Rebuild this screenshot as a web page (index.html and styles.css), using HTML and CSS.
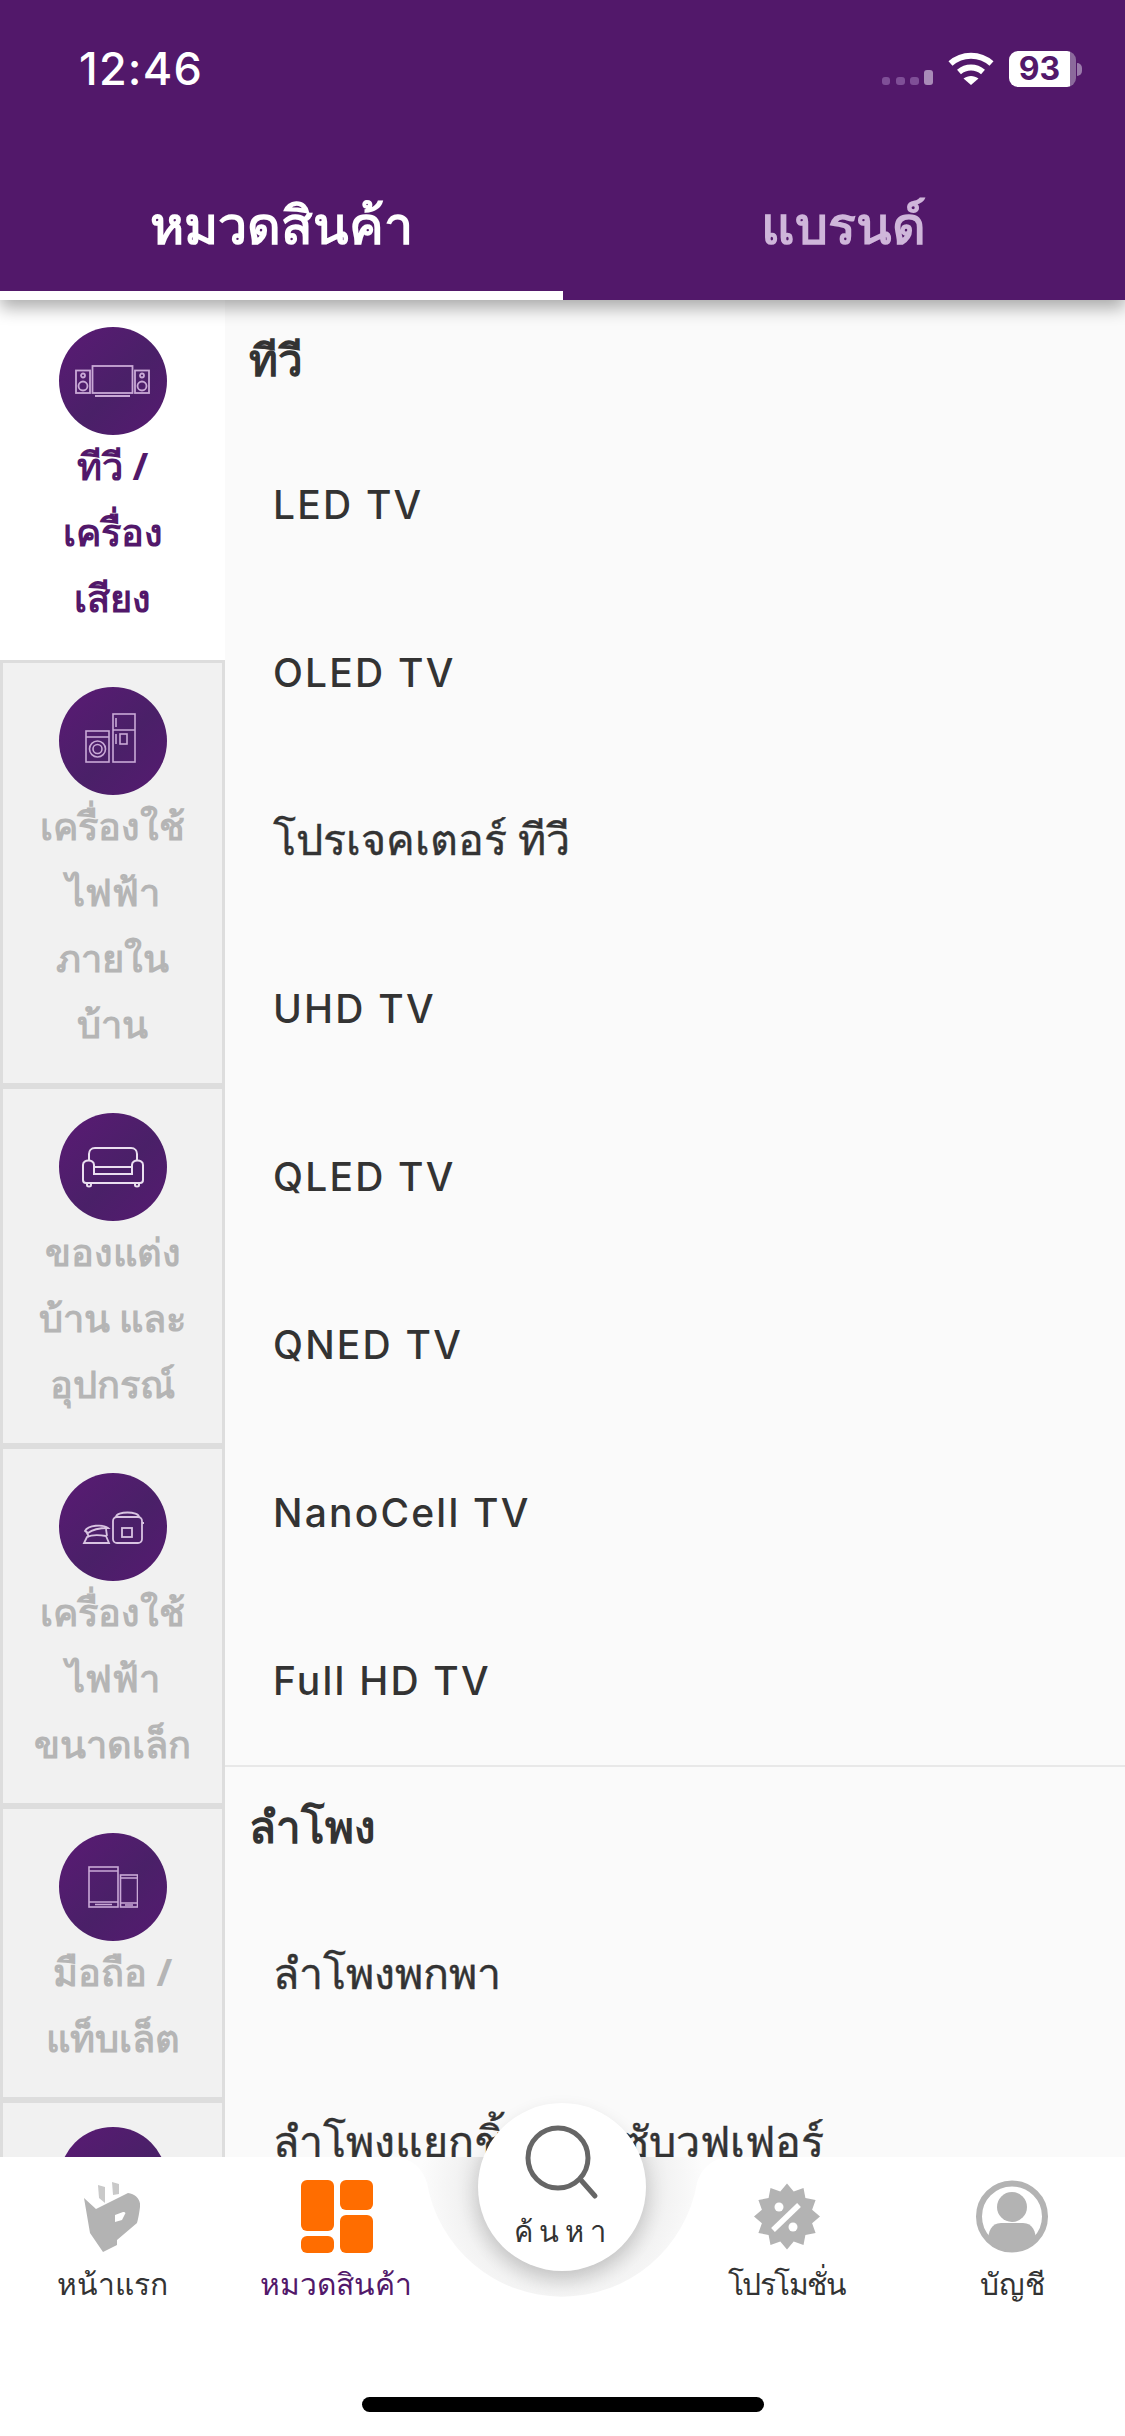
FILE: index.html
```html
<!DOCTYPE html>
<html lang="th">
<head>
<meta charset="utf-8">
<title>หมวดสินค้า</title>
<link rel="stylesheet" href="styles.css">
</head>
<body>
<div class="app">
  <header class="header">
    <div class="status">
      <span class="time">12:46</span>
      <div class="status-icons">
        <svg class="signal" width="51" height="15" viewBox="0 0 51 15"><g fill="#7f4f97"><rect x="0" y="7" width="8" height="8" rx="3"/><rect x="14" y="7" width="9" height="8" rx="3"/><rect x="28" y="7" width="9" height="8" rx="3"/></g><rect x="42" y="0" width="9" height="15" rx="3" fill="#a98bb8"/></svg>
        <svg class="wifi" width="46" height="33" viewBox="0 0 46 33"><g fill="none" stroke="#fff" stroke-width="6"><path d="M2.500 11.500C14 1 32 1 43.500 11.500"/><path d="M11 20c7-6 17-6 24 0"/></g><path d="M15.500 26.500c4.500-3.400 10.500-3.400 15 0l-7.500 6.500z" fill="#fff"/></svg>
        <div class="battery"><span class="battery-body">93</span><span class="battery-cap"></span></div>
      </div>
    </div>
    <nav class="tabs">
      <div class="tab tab-active">หมวดสินค้า</div>
      <div class="tab">แบรนด์</div>
    </nav>
  </header>

  <main class="main">
    <aside class="side">
      <div class="cat cat-active">
        <div class="cat-icon">
          <svg width="75" height="32" viewBox="0 0 75 32" fill="none" stroke="#c9a9d6" stroke-width="1.800"><rect x="17.500" y="1" width="40" height="27"/><rect x="1" y="5.500" width="14" height="22.500"/><rect x="60" y="5.500" width="14" height="22.500"/><circle cx="8" cy="21" r="4.500"/><circle cx="67" cy="21" r="4.500"/><circle cx="8" cy="10.500" r="2"/><circle cx="67" cy="10.500" r="2"/><path d="M20 31h35" stroke-width="2.200"/></svg>
        </div>
        <div class="cat-label">ทีวี /<br>เครื่อง<br>เสียง</div>
      </div>
      <div class="cat">
        <div class="cat-icon">
          <svg width="56" height="56" viewBox="0 0 56 56" fill="none" stroke="#c9a9d6" stroke-width="1.600"><rect x="1" y="18" width="23" height="31"/><path d="M1 24h23"/><circle cx="12.500" cy="36" r="8"/><circle cx="12.500" cy="36" r="4.500"/><rect x="28" y="1" width="22" height="48"/><path d="M28 17h22M31 5v9M31 21v10"/><rect x="35" y="21" width="7" height="10"/></svg>
        </div>
        <div class="cat-label">เครื่องใช้<br>ไฟฟ้า<br>ภายใน<br>บ้าน</div>
      </div>
      <div class="cat">
        <div class="cat-icon">
          <svg width="64" height="42" viewBox="0 0 64 42" fill="none" stroke="#eadff0" stroke-width="2"><path d="M8 14V8c0-3 2-6 6-6h36c4 0 6 3 6 6v6"/><path d="M2 19c0-6 11-6 11 0v9h38v-9c0-6 11-6 11 0v15c0 2-1 3-3 3H5c-2 0-3-1-3-3z"/><path d="M13 21h38M6 37v2c0 2 4 2 4 0v-2M54 37v2c0 2 4 2 4 0v-2"/></svg>
        </div>
        <div class="cat-label">ของแต่ง<br>บ้าน และ<br>อุปกรณ์</div>
      </div>
      <div class="cat">
        <div class="cat-icon">
          <svg width="62" height="33" viewBox="0 0 62 33" fill="none" stroke="#d9c4e2" stroke-width="1.800"><rect x="31" y="6" width="29" height="26" rx="4"/><path d="M34 6c0-6 23-6 23 0M60 12h2"/><rect x="40" y="17" width="10" height="9"/><path d="M2 32h25l-3-7c-6-1-15-1-19 1z"/><path d="M3 20c3-6 18-7 23-3-6 0-15 1-20 5z"/><path d="M4 20l3 6M24 18l1 7"/></svg>
        </div>
        <div class="cat-label">เครื่องใช้<br>ไฟฟ้า<br>ขนาดเล็ก</div>
      </div>
      <div class="cat">
        <div class="cat-icon">
          <svg width="50" height="42" viewBox="0 0 50 42" fill="none" stroke="#c9a9d6" stroke-width="1.600"><rect x="1" y="1" width="29" height="40"/><path d="M1 5h29M1 36h29M7 38.500h17"/><rect x="32.500" y="9" width="17" height="32"/><path d="M32.500 12h17M32.500 37h17M37 39h8"/></svg>
        </div>
        <div class="cat-label">มือถือ /<br>แท็บเล็ต</div>
      </div>
      <div class="cat">
        <div class="cat-icon"></div>
      </div>
    </aside>

    <section class="list">
      <div class="group">
        <h2 class="group-title">ทีวี</h2>
        <a class="item">LED TV</a>
        <a class="item">OLED TV</a>
        <a class="item item-th">โปรเจคเตอร์ ทีวี</a>
        <a class="item">UHD TV</a>
        <a class="item">QLED TV</a>
        <a class="item">QNED TV</a>
        <a class="item">NanoCell TV</a>
        <a class="item">Full HD TV</a>
      </div>
      <div class="group">
        <h2 class="group-title">ลำโพง</h2>
        <a class="item item-th">ลำโพงพกพา</a>
        <a class="item item-th">ลำโพงแยกชิ้น และซับวูฟเฟอร์</a>
      </div>
    </section>
  </main>

  <footer class="bar">
    <svg class="notch" width="350" height="141" viewBox="0 0 350 141">
      <defs><radialGradient id="notchFill" gradientUnits="userSpaceOnUse" cx="175" cy="30" r="142"><stop offset="0.6" stop-color="#e6e6e6"/><stop offset="0.75" stop-color="#f3f3f3"/><stop offset="1" stop-color="#fcfcfc"/></radialGradient></defs>
      <path d="M0 0H6C24 0 36 12 40 26A137 137 0 0 0 310 26C314 12 326 0 344 0H350Z" fill="url(#notchFill)"/>
    </svg>
    <div class="bar-items">
      <div class="bar-item">
        <svg class="bar-icon" width="56" height="73" viewBox="0 0 56 73"><g fill="#c9c9c9"><path d="M14 5l7 2v16l-6-5z"/><path d="M28 2l7 2v10l-6 1z"/></g><path fill-rule="evenodd" d="M0 18L12 29 44 13C52 14 57 20 56 27 55 35 54 39 53 43L33 60V65L19 72 6 53ZM31 35L39 32C41 32 42 33 41 34L38 40 31 42Z" fill="#b3b3b3"/></svg>
        <span class="bar-label">หน้าแรก</span>
      </div>
      <div class="bar-item bar-item-active">
        <svg class="bar-icon bar-icon-grid" width="72" height="73" viewBox="0 0 72 73"><g fill="#ff6d00"><rect x="0" y="0" width="33" height="51" rx="6"/><rect x="39" y="0" width="33" height="30" rx="6"/><rect x="0" y="56" width="33" height="17" rx="6"/><rect x="39" y="35" width="33" height="38" rx="6"/></g></svg>
        <span class="bar-label">หมวดสินค้า</span>
      </div>
      <div class="bar-item bar-item-center">
        <button class="search-btn">
          <svg width="74" height="76" viewBox="0 0 74 76" fill="none" stroke="#666" stroke-width="5" stroke-linecap="round"><circle cx="33" cy="33" r="30"/><path d="M55 54l15 17"/></svg>
          <span class="search-label">ค้นหา</span>
        </button>
      </div>
      <div class="bar-item">
        <svg class="bar-icon" width="66" height="73" viewBox="0 0 66 73"><path d="M33 3.500L39.700 11.400 49.500 7.900 51.400 18.100 61.600 20 58.100 29.800 66 36.500 58.100 43.200 61.600 53 51.400 54.900 49.500 65.100 39.700 61.600 33 69.500 26.300 61.600 16.500 65.100 14.600 54.900 4.400 53 7.900 43.200 0 36.500 7.900 29.800 4.400 20 14.600 18.100 16.500 7.900 26.300 11.400Z" fill="#b3b3b3"/><circle cx="25" cy="27" r="4.500" fill="#fff"/><circle cx="39" cy="47" r="4.500" fill="#fff"/><path d="M19 50l26-25" stroke="#fff" stroke-width="5.500"/></svg>
        <span class="bar-label bar-label-tight">โปรโมชั่น</span>
      </div>
      <div class="bar-item">
        <svg class="bar-icon" width="72" height="73" viewBox="0 0 72 73"><circle cx="36" cy="36.500" r="33" fill="#fff" stroke="#b3b3b3" stroke-width="6"/><circle cx="36" cy="27" r="15" fill="#b3b3b3"/><path d="M12 62c0-10 3-19 13-19h22c10 0 13 9 13 19-12 11-36 11-48 0z" fill="#b3b3b3"/></svg>
        <span class="bar-label">บัญชี</span>
      </div>
    </div>
    <div class="home-line"></div>
  </footer>
</div>
</body>
</html>
```

FILE: styles.css
```css
* { box-sizing: border-box; }
html, body { margin: 0; padding: 0; }
body { width: 1125px; height: 2436px; overflow: hidden; background: #fff; font-family: "Noto Sans", "Inter", "Noto Sans CJK SC", sans-serif; color: #333; }
.app { display: flex; flex-direction: column; height: 2436px; }

.header { position: relative; z-index: 3; height: 300px; flex: none; background: #52186a; box-shadow: 0 8px 16px rgba(0,0,0,.32); display: flex; flex-direction: column; }
.status { height: 135px; padding: 45px 43px 0 79px; display: flex; justify-content: space-between; align-items: flex-start; }
.time { font-family: "Inter", sans-serif; font-size: 45px; line-height: 48px; font-weight: 500; letter-spacing: 1.2px; color: #fff; }
.status-icons { display: flex; align-items: flex-end; gap: 15px; margin-top: 6px; height: 36px; }
.signal { margin-bottom: 2px; }
.wifi { margin-bottom: 2px; }
.battery { display: flex; align-items: center; gap: 1px; }
.battery-body { display: block; width: 67px; height: 36px; padding-right: 6px; border-radius: 9px; background: linear-gradient(to right, #fff 61px, #8b6a9c 61px); text-align: center; font-family: "Inter", sans-serif; font-size: 32px; line-height: 36px; font-weight: 700; color: #52186a; }
.battery-cap { width: 5px; height: 13px; border-radius: 0 6px 6px 0; background: #9a7bab; }

.tabs { flex: 1; display: flex; }
.tab { flex: 1; height: 165px; padding-top: 59px; text-align: center; font-size: 52px; line-height: 60px; font-weight: 700; color: #cfb6da; border-bottom: 9px solid transparent; }
.tab-active { color: #fff; border-bottom-color: #fff; }

.main { flex: 1; min-height: 0; display: flex; overflow: hidden; }
.side { width: 225px; flex: none; }
.cat { padding: 24px 0; background: #f1f1f1; border: 3px solid #ddd; display: flex; flex-direction: column; align-items: center; }
.cat-active { background: #fff; border: 0; padding: 27px 0; }
.cat-icon { width: 108px; height: 108px; flex: none; border-radius: 50%; background: linear-gradient(135deg, #5a1a74, #4a2068 55%, #551a70); display: flex; align-items: center; justify-content: center; }
.cat-label { width: 100%; margin-top: -3px; margin-bottom: 3px; text-align: center; font-size: 38px; line-height: 66px; font-weight: 700; color: #b5b5b5; }
.cat-active .cat-label { color: #52186a; }

.list { flex: 1; min-width: 0; background: #fafafa; }
.group + .group { border-top: 2px solid #e8e8e8; }
.group-title { margin: 0; padding: 29px 0 0 24px; height: 121px; font-size: 44px; line-height: 60px; font-weight: 700; color: #333; }
.group + .group .group-title { height: 124px; }
.item { display: block; height: 168px; padding-left: 48px; font-family: "Inter", "Noto Sans", sans-serif; font-size: 39px; line-height: 168px; font-weight: 500; letter-spacing: 2.2px; color: #333; white-space: nowrap; }
.item-th { font-size: 43px; letter-spacing: 0; line-height: 165px; -webkit-text-stroke: 0.4px #333; }

.bar { position: relative; z-index: 4; flex: none; height: 279px; background: #fff; }
.notch { position: absolute; left: 387px; top: 0; }
.bar-items { position: relative; display: grid; grid-template-columns: 224px 224px 226px 225px 226px; padding-top: 23px; }
.bar-item { display: flex; flex-direction: column; align-items: center; }
.bar-icon { height: 73px; flex: none; }
.bar-icon-grid { margin-left: 2px; }
.bar-label { margin-top: 9px; font-size: 30px; line-height: 44px; color: #333; white-space: nowrap; }
.bar-label-tight { letter-spacing: -1.5px; }
.bar-item-active .bar-label { color: #52186a; }
.bar-item-center { position: relative; }
.search-btn { position: absolute; left: 30px; top: -77px; width: 168px; height: 168px; border: 0; padding: 22px 0 0; border-radius: 50%; background: #fff; display: flex; flex-direction: column; align-items: center; box-shadow: 0 8px 18px rgba(0,0,0,.14); font-family: inherit; }
.search-label { margin-top: 10px; padding-left: 2px; font-size: 29px; line-height: 40px; letter-spacing: 6px; color: #333; }
.home-line { position: absolute; left: 362px; top: 240px; width: 402px; height: 15px; border-radius: 8px; background: #000; }
```
